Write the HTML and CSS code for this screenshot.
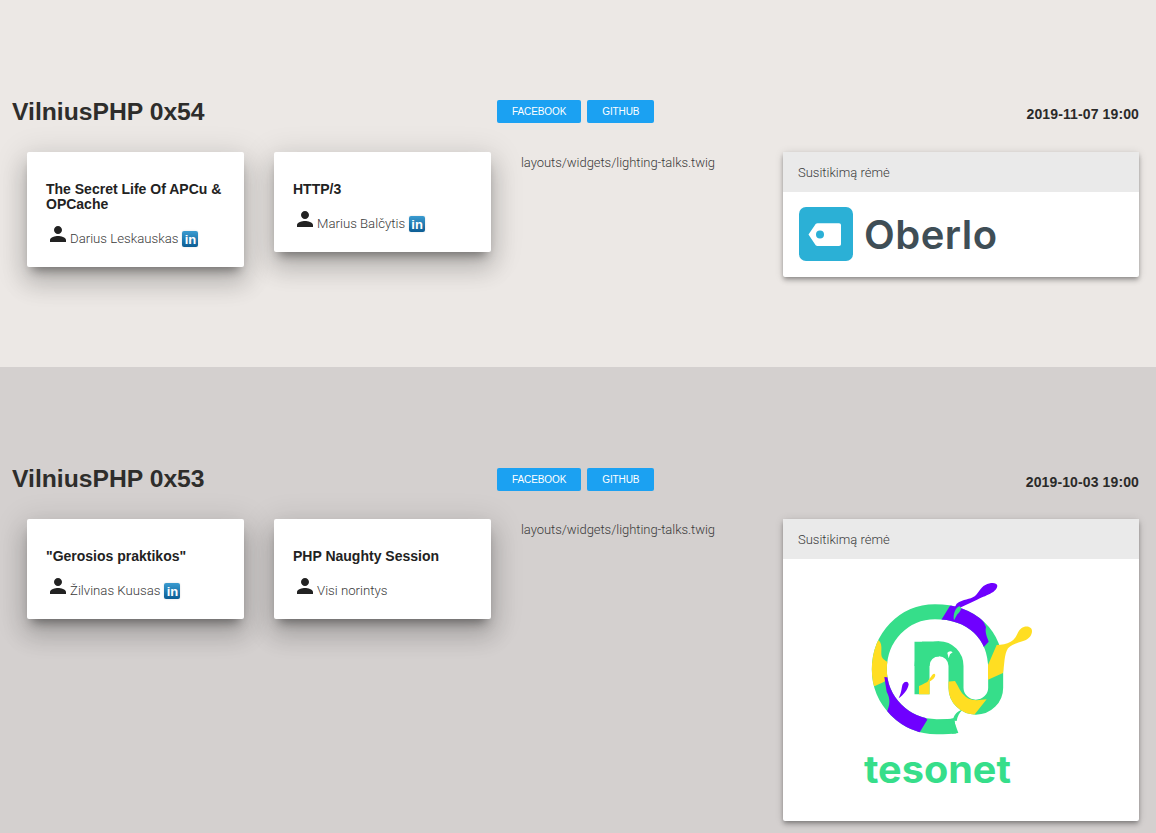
FILE: index.html
```html
<!DOCTYPE html>
<html lang="en">
<head>
    <meta charset="UTF-8">
    <meta name="viewport" content="width=device-width, initial-scale=1.0">
    <title>VilniusPHP</title>
    <link rel="stylesheet" href="styles.css">
</head>
<body>
    <!-- icons used by the speaker rows -->
    <svg class="defs" width="0" height="0">
        <symbol id="person" viewBox="0 0 24 24">
            <path d="M12 12c2.21 0 4-1.79 4-4s-1.79-4-4-4-4 1.79-4 4 1.79 4 4 4zm0 2c-2.67 0-8 1.34-8 4v2h16v-2c0-2.66-5.33-4-8-4z"/>
        </symbol>
    </svg>

    <section class="meetup first">
        <div class="meetup-head">
            <h1>VilniusPHP 0x54</h1>
            <div class="links">
                <a class="btn" href="#">Facebook</a>
                <a class="btn" href="#">Github</a>
            </div>
            <div class="date">2019-11-07 19:00</div>
        </div>
        <div class="meetup-body">
            <div class="talk">
                <h2>The Secret Life Of APCu &amp; OPCache</h2>
                <div class="speaker">
                    <svg class="person"><use href="#person"/></svg>
                    <span>Darius Leskauskas</span>
                    <span class="linkedin">in</span>
                </div>
            </div>
            <div class="talk">
                <h2>HTTP/3</h2>
                <div class="speaker">
                    <svg class="person"><use href="#person"/></svg>
                    <span>Marius Balčytis</span>
                    <span class="linkedin">in</span>
                </div>
            </div>
            <div class="note">layouts/widgets/lighting-talks.twig</div>
            <div class="sponsor">
                <div class="sponsor-head">Susitikimą rėmė</div>
                <div class="sponsor-body oberlo">
                    <svg class="oberlo-icon" viewBox="0 0 54 54">
                        <rect width="54" height="54" rx="7" fill="#2bb0d6"/>
                        <path d="M9.500 27.500L16 18c.6-1 1.200-1.700 2.500-1.700H40c1.300 0 2 .7 2 2V37c0 1.300-.7 2-2 2H18.500c-1.300 0-1.900-.7-2.500-1.700z" fill="#fff"/>
                        <circle cx="21" cy="27.500" r="4" fill="#2bb0d6"/>
                    </svg>
                    <span class="oberlo-name">Oberlo</span>
                </div>
            </div>
        </div>
    </section>

    <section class="meetup second">
        <div class="meetup-head">
            <h1>VilniusPHP 0x53</h1>
            <div class="links">
                <a class="btn" href="#">Facebook</a>
                <a class="btn" href="#">Github</a>
            </div>
            <div class="date">2019-10-03 19:00</div>
        </div>
        <div class="meetup-body">
            <div class="talk">
                <h2>"Gerosios praktikos"</h2>
                <div class="speaker">
                    <svg class="person"><use href="#person"/></svg>
                    <span>Žilvinas Kuusas</span>
                    <span class="linkedin">in</span>
                </div>
            </div>
            <div class="talk">
                <h2>PHP Naughty Session</h2>
                <div class="speaker">
                    <svg class="person"><use href="#person"/></svg>
                    <span>Visi norintys</span>
                </div>
            </div>
            <div class="note">layouts/widgets/lighting-talks.twig</div>
            <div class="sponsor">
                <div class="sponsor-head">Susitikimą rėmė</div>
                <div class="sponsor-body tesonet">
                    <svg class="tesonet-logo" viewBox="0 0 630 690">
                        <mask id="ring-mask" maskUnits="userSpaceOnUse" x="0" y="0" width="630" height="690">
                            <g fill="none" stroke="#fff" stroke-width="45">
                                <path d="M346 465 C330 467 310 467 290 467 C195 467 118 390 118 295 C118 200 190 122 285 122 C395 122 467 190 467 295 V350 A59 58 0 0 1 348 350 V285 A51 52 0 0 0 246 285"/>
                                <path d="M246 370 V212 M246 234 H297"/>
                            </g>
                        </mask>
                        <!-- green base -->
                        <g fill="none" stroke="#36de8a" stroke-width="45">
                            <path d="M346 465 C330 467 310 467 290 467 C195 467 118 390 118 295 C118 200 190 122 285 122 C395 122 467 190 467 295 V350 A59 58 0 0 1 348 350 V285 A51 52 0 0 0 246 285"/>
                            <path d="M246 370 V212 M246 234 H297"/>
                        </g>
                        <path fill="#36de8a" d="M340 444 L355 486 L336 488z"/>
                        <path fill="#36de8a" d="M322 446 L350 450 C352 436 358 424 368 416 C352 420 344 430 340 442z"/>
                        <!-- colour patches, cut to the ring shape -->
                        <g mask="url(#ring-mask)">
                            <path fill="#ffde22" d="M90 215 L116 208 C132 222 118 250 128 262 C135 270 145 275 165 280 V318 C132 330 118 342 100 346 L90 346z"/>
                            <path fill="#6f00ff" d="M133 318 L170 322 L220 400 L262 446 L234 492 L130 440 L140 424 C150 400 152 385 140 362z"/>
                            <path fill="#6f00ff" d="M296 160 L330 104 L362 84 C400 110 425 135 438 168 C434 185 442 200 446 212 L420 240 L340 165z"/>
                            <path fill="#ffde22" d="M320 332 L345 330 C358 350 360 362 372 372 C390 392 412 388 440 385 L396 440 L340 440 L320 400z"/>
                            <path fill="#ffde22" d="M237 345 C250 340 258 335 270 328 V372 H237z"/>
                            <path fill="#6f00ff" d="M336 214 L372 214 V252 C360 240 350 226 336 214z"/>
                        </g>
                        <!-- splashes -->
                        <path fill="#6f00ff" d="M472 44 C470 34 452 34 436 42 C420 50 416 66 404 76 C390 86 370 84 350 98 L336 124 C360 108 385 100 408 88 C425 76 470 68 472 44z"/>
                        <path fill="#36de8a" d="M342 148 C338 132 346 110 358 106 C368 108 362 122 352 130z"/>
                        <path fill="#ffde22" d="M576 180 C576 166 556 162 544 172 C530 184 532 200 512 212 C500 220 485 220 470 222 L444 282 L444 326 L489 306 C494 280 492 250 504 232 C516 218 540 215 556 208 C568 202 576 192 576 180z"/>
                        <path fill="#6f00ff" d="M206 340 C204 330 194 330 188 340 C184 350 186 362 176 382 C190 372 204 356 206 340z"/>
                        <path fill="#ffde22" d="M286 312 C284 306 278 308 274 316 L262 332 L272 330 C278 326 286 320 286 312z"/>
                        <path fill="#fff" d="M322 246 C326 240 332 238 338 244 L330 250 L326 262z"/>
                        <text class="tesonet-name" x="72" y="635" textLength="441" lengthAdjust="spacingAndGlyphs">tesonet</text>
                    </svg>
                </div>
            </div>
        </div>
    </section>
</body>
</html>
```
FILE: styles.css
```css
/* page styles */

body {
    margin: 0;
    font-family: 'Liberation Sans', Arial, sans-serif;
    color: #2b2a29;
}
.defs {
    display: none;
}
.meetup {
    padding: 100px 17px 90px 12px;
}
.first {
    background-color: #ece8e5;
    height: 367px;
    box-sizing: border-box;
}
.second {
    background-color: #d4d0cf;
    padding-bottom: 12px;
    padding-top: 101px;
}
.meetup-head {
    display: grid;
    grid-template-columns: 485px 1fr auto;
    height: 52px;
}
.meetup-head h1 {
    font-size: 24.700px;
    line-height: 24px;
    margin: 0;
    color: #2e2d2b;
}
.second .meetup-head {
    height: 51px;
}
.second .meetup-head h1 {
    margin-top: -1px;
}
.links {
    display: flex;
    gap: 6px;
    align-items: flex-start;
}
.btn {
    display: block;
    padding: 0 15px;
    height: 23px;
    line-height: 24px;
    font-size: 10px;
    letter-spacing: -0.1px;
    text-transform: uppercase;
    text-decoration: none;
    color: #fff;
    background-color: #1ba1f2;
    border-radius: 2px;
}
.date {
    font-size: 14px;
    letter-spacing: 0.12px;
    font-weight: bold;
    line-height: 16px;
    padding-top: 6px;
}
.meetup-body {
    display: flex;
    gap: 30px;
    align-items: flex-start;
    padding-left: 15px;
}
.talk {
    width: 217px;
    box-sizing: border-box;
    padding: 30px 19px 21px 19px;
    background-color: #fff;
    border-radius: 2px;
    box-shadow: 0 16px 24px 2px rgba(0,0,0,.14), 0 6px 30px 5px rgba(0,0,0,.12), 0 8px 10px -5px rgba(0,0,0,.4);
}
.talk h2 {
    font-size: 14px;
    line-height: 15px;
    margin: 0 0 10px 0;
    color: #222;
}
.speaker {
    display: flex;
    align-items: flex-end;
    height: 24px;
    margin-top: 6px;
    font-family: Roboto, 'Liberation Sans', sans-serif;
    font-weight: 300;
    font-size: 13.200px;
    color: #3a3a3a;
}
.person {
    width: 24px;
    height: 24px;
    fill: #222;
    flex: none;
}
.linkedin {
    width: 16px;
    height: 16px;
    margin-left: 4px;
    margin-bottom: -1px;
    border-radius: 2px;
    background: linear-gradient(#3a9bd0, #0c5d94);
    color: #fff;
    font-family: 'Liberation Sans', sans-serif;
    font-weight: bold;
    font-size: 13px;
    line-height: 17px;
    text-align: center;
    box-shadow: 0 0 2px rgba(0,0,0,.15);
}
.note {
    width: 231px;
    padding-top: 1px;
    font-family: Roboto, 'Liberation Sans', sans-serif;
    font-weight: 300;
    font-size: 13px;
    letter-spacing: -0.05px;
    line-height: 20px;
    color: #3a3a3a;
}
.sponsor {
    width: 356px;
    margin-left: auto;
    background-color: #fff;
    border-radius: 2px;
    box-shadow: 0 4px 5px 0 rgba(0,0,0,.14), 0 1px 10px 0 rgba(0,0,0,.12), 0 2px 4px -1px rgba(0,0,0,.3);
}
.sponsor-head {
    height: 40px;
    line-height: 41px;
    padding-left: 15px;
    background-color: #eaeaea;
    font-family: Roboto, 'Liberation Sans', sans-serif;
    font-weight: 300;
    font-size: 13px;
    color: #3a3a3a;
}
.oberlo {
    display: flex;
    align-items: center;
    gap: 11px;
    height: 85px;
    padding-left: 16px;
}
.oberlo-icon {
    width: 54px;
    height: 54px;
    flex: none;
    margin-bottom: 2px;
}
.oberlo-name {
    font-family: Inter, sans-serif;
    font-size: 40px;
    font-weight: 600;
    letter-spacing: 0.5px;
    color: #3f4e56;
}
.tesonet {
    height: 262px;
    padding: 12px 0 0 57px;
    box-sizing: border-box;
}
.tesonet-logo {
    display: block;
    width: 210px;
    height: 230px;
}
.tesonet-name {
    font-family: Inter, sans-serif;
    font-weight: 700;
    font-size: 112px;
    fill: #36de8a;
}
```
